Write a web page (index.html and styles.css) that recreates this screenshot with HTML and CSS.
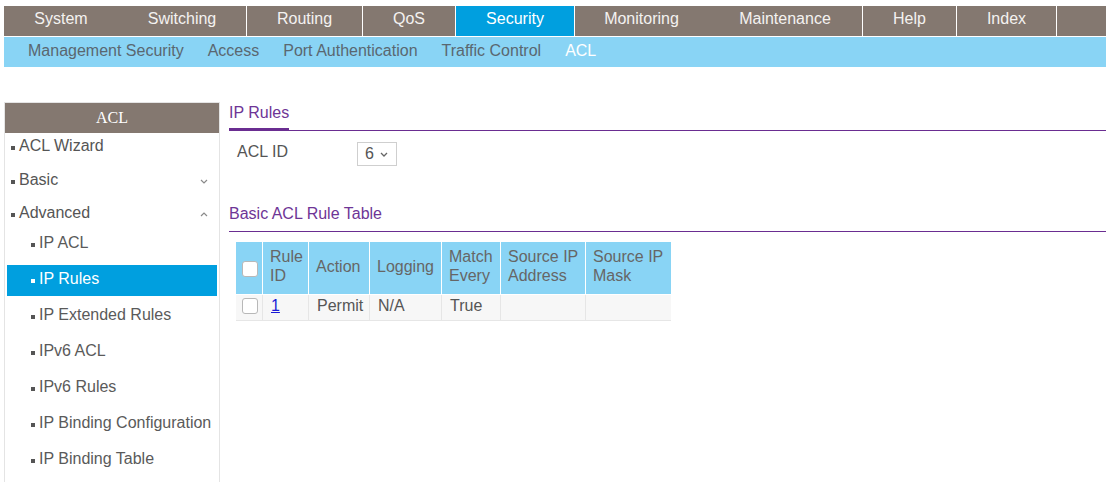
FILE: index.html
```html
<!DOCTYPE html>
<html lang="en">
<head>
<meta charset="utf-8">
<title>IP Rules</title>
<link rel="stylesheet" href="styles.css">
</head>
<body>
<div class="page">
  <nav class="topnav">
    <a class="tn tn-system">System</a>
    <a class="tn tn-switching">Switching</a>
    <a class="tn tn-routing sep">Routing</a>
    <a class="tn tn-qos sep">QoS</a>
    <a class="tn tn-security sep active">Security</a>
    <a class="tn tn-monitoring sep">Monitoring</a>
    <a class="tn tn-maintenance">Maintenance</a>
    <a class="tn tn-help sep">Help</a>
    <a class="tn tn-index sep">Index</a>
    <span class="tn tn-fill sep"></span>
  </nav>
  <nav class="subnav">
    <a>Management Security</a>
    <a>Access</a>
    <a>Port Authentication</a>
    <a>Traffic Control</a>
    <a class="active">ACL</a>
  </nav>

  <div class="layout">
    <aside class="sidebar">
      <div class="side-head">ACL</div>
      <ul class="side-menu">
        <li class="side-item first"><span class="bullet"></span><span class="label">ACL Wizard</span></li>
        <li class="side-item"><span class="bullet"></span><span class="label">Basic</span>
          <svg class="chev" width="8" height="5" viewBox="0 0 8 5"><path d="M1 1 L4 4 L7 1" fill="none" stroke="#8a8a8a" stroke-width="1.2"/></svg>
        </li>
        <li class="side-item open"><span class="bullet"></span><span class="label">Advanced</span>
          <svg class="chev" width="8" height="5" viewBox="0 0 8 5"><path d="M1 4 L4 1 L7 4" fill="none" stroke="#8a8a8a" stroke-width="1.2"/></svg>
        </li>
      </ul>
      <ul class="sub-menu">
        <li class="sub-item"><span class="bullet"></span>IP ACL</li>
        <li class="sub-item selected"><span class="bullet"></span>IP Rules</li>
        <li class="sub-item"><span class="bullet"></span>IP Extended Rules</li>
        <li class="sub-item"><span class="bullet"></span>IPv6 ACL</li>
        <li class="sub-item"><span class="bullet"></span>IPv6 Rules</li>
        <li class="sub-item"><span class="bullet"></span>IP Binding Configuration</li>
        <li class="sub-item"><span class="bullet"></span>IP Binding Table</li>
      </ul>
    </aside>

    <main class="content">
      <div class="sec-head"><span class="tab">IP Rules</span></div>

      <div class="form-row">
        <label class="form-label">ACL ID</label>
        <div class="select">
          <span>6</span>
          <svg width="8" height="5" viewBox="0 0 8 5"><path d="M1 1 L4 4 L7 1" fill="none" stroke="#666" stroke-width="1.3"/></svg>
        </div>
      </div>

      <div class="table-head">Basic ACL Rule Table</div>

      <table class="rules">
        <colgroup>
          <col class="c-cb"><col class="c-id"><col class="c-action"><col class="c-log"><col class="c-match"><col class="c-addr"><col class="c-mask">
        </colgroup>
        <thead>
          <tr>
            <th class="cb"><span class="check"></span></th>
            <th>Rule<br>ID</th>
            <th>Action</th>
            <th>Logging</th>
            <th>Match<br>Every</th>
            <th>Source IP<br>Address</th>
            <th>Source IP<br>Mask</th>
          </tr>
        </thead>
        <tbody>
          <tr>
            <td class="cb"><span class="check"></span></td>
            <td><a class="link">1</a></td>
            <td>Permit</td>
            <td>N/A</td>
            <td>True</td>
            <td></td>
            <td></td>
          </tr>
        </tbody>
      </table>
    </main>
  </div>
</div>
</body>
</html>
```

FILE: styles.css
```css
* { box-sizing: border-box; }

body {
  margin: 0;
  font-family: "Liberation Sans", Arial, sans-serif;
  font-size: 16px;
  color: #555;
  background: #fff;
  overflow: hidden;
}

.page {
  padding: 6px 0 0 4px;
}

/* Top navigation */
.topnav {
  display: flex;
  height: 31px;
  background: #847870;
  border-bottom: 1px solid #fff;
}
.tn {
  display: block;
  color: #f4f2f0;
  text-align: center;
  line-height: 26px;
  text-decoration: none;
  flex: none;
}
.tn.sep { border-left: 1px solid #fff; }
.tn.active { background: #009fdf; color: #fff; }
.tn-system { width: 114px; }
.tn-switching { width: 128px; }
.tn-routing { width: 116px; }
.tn-qos { width: 93px; }
.tn-security { width: 119px; }
.tn-monitoring { width: 134px; }
.tn-maintenance { width: 154px; }
.tn-help { width: 94px; }
.tn-index { width: 100px; }
.tn-fill { flex: 1; }

/* Sub navigation */
.subnav {
  display: flex;
  gap: 24px;
  height: 30px;
  background: #89d4f5;
  padding-left: 24px;
  line-height: 28px;
}
.subnav a { color: #5a6770; }
.subnav a.active { color: #fff; }

/* Layout */
.layout {
  display: flex;
  gap: 9px;
  margin-top: 35px;
}

/* Sidebar */
.sidebar {
  width: 216px;
  flex: none;
  height: 380px;
  border: 1px solid #e4e4e4;
  border-bottom: none;
}
.side-head {
  height: 30px;
  line-height: 30px;
  background: #847870;
  color: #fff;
  text-align: center;
  font-family: "Liberation Serif", "Times New Roman", serif;
  font-size: 16px;
}
.side-menu, .sub-menu {
  list-style: none;
  margin: 0;
  padding: 0;
}
.side-item {
  display: flex;
  align-items: flex-start;
  height: 33px;
  line-height: 26px;
  padding-left: 6px;
  padding-right: 11px;
  color: #555;
}
.side-item.first { height: 34px; }
.side-item.open { height: 29px; }
.side-item .label { flex: 1; }
.side-item .chev { margin-top: 12px; }

.bullet {
  display: inline-block;
  width: 4px;
  height: 4px;
  background: #555;
  margin-right: 4px;
  align-self: flex-start;
  margin-top: 13px;
  flex: none;
}

.sub-item {
  display: flex;
  height: 31px;
  line-height: 26px;
  padding-top: 1px;
  margin: 0 2px 5px;
  padding-left: 24px;
  color: #5a5a5a;
}
.sub-item.selected {
  background: #009fdf;
  color: #fff;
}
.sub-item.selected .bullet { background: #fff; }

/* Content */
.content {
  flex: 1;
  padding-top: 1px;
}
.sec-head {
  display: flex;
  border-bottom: 1px solid #6a2d91;
}
.sec-head .tab {
  color: #6e3596;
  line-height: 20px;
  padding-top: 0;
  padding-bottom: 5px;
  border-bottom: 3px solid #6a2d91;
  margin-bottom: -1px;
}

.form-row {
  display: flex;
  align-items: flex-start;
  margin-top: 11px;
  padding-left: 8px;
}
.form-label {
  width: 120px;
  line-height: 20px;
  color: #555;
}
.select {
  display: flex;
  align-items: center;
  gap: 6px;
  width: 40px;
  height: 24px;
  border: 1px solid #cfcfcf;
  padding-left: 7px;
  color: #555;
  line-height: 20px;
}
.select svg { margin-top: 1px; }

.table-head {
  margin-top: 38px;
  line-height: 20px;
  padding-bottom: 7px;
  color: #6e3596;
  border-bottom: 1px solid #6a2d91;
}

.rules {
  margin: 10px 0 0 7px;
  width: 435px;
  table-layout: fixed;
  border-collapse: separate;
  border-spacing: 0;
}
.c-cb { width: 26px; }
.c-id { width: 46px; }
.c-action { width: 61px; }
.c-log { width: 72px; }
.c-match { width: 59px; }
.c-addr { width: 85px; }
.c-mask { width: 86px; }

.rules th {
  background: #89d4f5;
  color: #666;
  font-weight: normal;
  text-align: left;
  vertical-align: middle;
  line-height: 19px;
  padding: 5px 4px 9px 7px;
  border-left: 1px solid #fff;
  border-bottom: 1px solid #fff;
  white-space: nowrap;
}
.rules th:first-child { border-left: none; }
.rules th.cb, .rules td.cb { padding: 0 0 0 6px; }

.rules td {
  background: #f7f7f7;
  color: #555;
  line-height: 20px;
  padding: 1px 4px 4px 8px;
  height: 26px;
  border-left: 1px solid #e6e6e6;
  border-bottom: 1px solid #e6e6e6;
  vertical-align: top;
}
.rules td:first-child { border-left: none; }
.rules td.cb { vertical-align: top; padding-top: 3px; }

.check {
  display: block;
  width: 16px;
  height: 16px;
  background: #fff;
  border: 1px solid #b8b8b8;
  border-radius: 3px;
}
.rules th.cb .check { margin-top: 2px; }

.link {
  color: #1a1ad6;
  text-decoration: underline;
}
```
